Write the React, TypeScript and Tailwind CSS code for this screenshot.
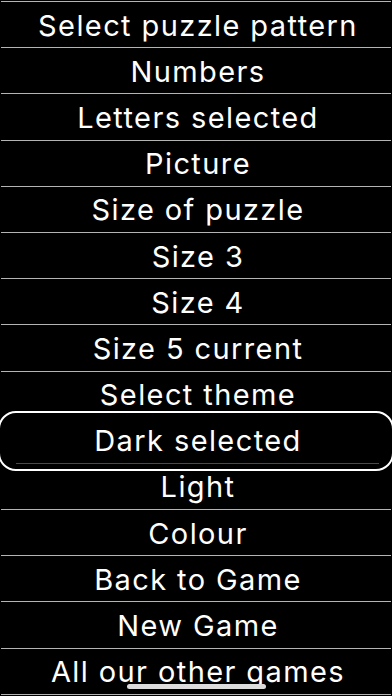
import React from "react";

const items = [
  "Select puzzle pattern",
  "Numbers",
  "Letters selected",
  "Picture",
  "Size of puzzle",
  "Size 3",
  "Size 4",
  "Size 5 current",
  "Select theme",
  "Dark selected",
  "Light",
  "Colour",
  "Back to Game",
  "New Game",
  "All our other games",
];

export default function App() {
  return (
    <div
      className="relative w-[392px] h-[696px] bg-black overflow-hidden text-white"
      style={{ fontFamily: "Inter, 'Noto Sans', sans-serif" }}
    >
      <div className="flex flex-col pt-[1px]">
        {items.map((t, i) => {
          const focused = i === 9;
          const prevFocused = i === 10;
          return (
            <div key={t} className="relative h-[46.2px] flex flex-col">
              <div
                className={
                  focused || prevFocused
                    ? "h-[1px] mx-[1px] bg-transparent"
                    : "h-[1px] mx-[1px] bg-[#b4b4b4]"
                }
              />
              <div className="flex-1 flex items-center justify-center pl-[4px] pt-[1px] text-[29px] leading-none tracking-[1.4px]">
                {t}
              </div>
              {focused && (
                <>
                  <div className="absolute left-[16px] right-[13px] bottom-[-1px] h-[1px] bg-[#4a4a4a]" />
                  <div className="absolute left-[-2px] right-[-2px] top-[-6px] bottom-[-8px] rounded-[18px] border-2 border-white" />
                </>
              )}
            </div>
          );
        })}
        <div className="h-[1px] mx-[1px] bg-[#b4b4b4]" />
      </div>
      <div className="absolute left-[127px] w-[139px] top-[684px] h-[5px] rounded-full bg-[#dcdcdc]" />
    </div>
  );
}
